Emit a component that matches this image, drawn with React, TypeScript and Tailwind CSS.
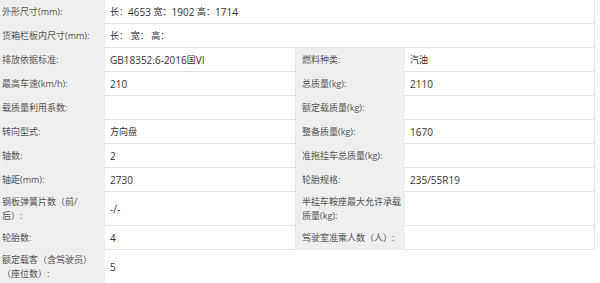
import React from 'react'

type Row = {
  h: string
  l1: React.ReactNode
  v1: string
  l2?: React.ReactNode
  v2?: string
  span?: boolean
  tail?: boolean
}

const rows: Row[] = [
  { h: 'h-[24px]', l1: '外形尺寸(mm):', v1: '长：4653 宽：1902 高：1714', span: true },
  { h: 'h-[24px]', l1: '货箱栏板内尺寸(mm):', v1: '长： 宽： 高：', span: true },
  { h: 'h-[24px]', l1: '排放依据标准:', v1: 'GB18352.6-2016国VI', l2: '燃料种类:', v2: '汽油' },
  { h: 'h-[24px]', l1: '最高车速(km/h):', v1: '210', l2: '总质量(kg):', v2: '2110' },
  { h: 'h-[24px]', l1: '载质量利用系数:', v1: '', l2: '额定载质量(kg):', v2: '' },
  { h: 'h-[24px]', l1: '转向型式:', v1: '方向盘', l2: '整备质量(kg):', v2: '1670' },
  { h: 'h-[24px]', l1: '轴数:', v1: '2', l2: '准拖挂车总质量(kg):', v2: '' },
  { h: 'h-[24px]', l1: '轴距(mm):', v1: '2730', l2: '轮胎规格:', v2: '235/55R19' },
  {
    h: 'h-[34px]',
    l1: (
      <>
        钢板弹簧片数（前/
        <br />
        后）:
      </>
    ),
    v1: '-/-',
    l2: (
      <>
        半挂车鞍座最大允许承载
        <br />
        质量(kg):
      </>
    ),
    v2: '',
  },
  { h: 'h-[24px]', l1: '轮胎数:', v1: '4', l2: '驾驶室准乘人数（人）:', v2: '' },
  {
    h: 'h-[33px]',
    l1: (
      <>
        额定载客（含驾驶员）
        <br />
        （座位数）:
      </>
    ),
    v1: '5',
    tail: true,
  },
]

// CJK runs render a touch smaller than the digits in the original
function Val({ text }: { text?: string }) {
  if (!text) return null
  const parts = text.split(/([\u3000-\u9fff\uff00-\uffef]+)/).filter(Boolean)
  return (
    <>
      {parts.map((p, i) =>
        /[\u3000-\u9fff\uff00-\uffef]/.test(p) ? (
          <span key={i} className="text-[9px]">
            {p}
          </span>
        ) : (
          <span key={i} className="whitespace-pre">{p}</span>
        )
      )}
    </>
  )
}

export default function App() {
  return (
    <div
      className="w-[600px] h-[283px] overflow-hidden bg-white text-[10px] leading-[14px] text-[#333]"
      style={{ fontFamily: '"Open Sans", "Noto Sans CJK SC", sans-serif' }}
    >
      {rows.map((r, i) => (
        <div key={i} className={`flex ${r.h}`}>
          <div className="w-[105px] shrink-0 bg-[#efefef] pl-[2px] flex items-center whitespace-nowrap text-[9px] text-[#555]">
            {r.l1}
          </div>
          {r.span ? (
            <div className="w-[490px] bg-white border-b border-r border-[#e6e6e6] pl-[5px] flex items-center whitespace-nowrap">
              <Val text={r.v1} />
            </div>
          ) : (
            <>
              <div
                className={`w-[191px] bg-white pl-[5px] flex items-center whitespace-nowrap ${
                  r.tail ? '' : 'border-b border-r border-[#e6e6e6]'
                }`}
              >
                <Val text={r.v1} />
              </div>
              {r.tail ? (
                <div className="flex-1 bg-white" />
              ) : (
                <>
                  <div className="w-[109px] shrink-0 bg-[#efefef] pl-[6px] flex items-center whitespace-nowrap text-[9px] text-[#555]">
                    {r.l2}
                  </div>
                  <div className="w-[190px] bg-white border-b border-r border-[#e6e6e6] pl-[5px] flex items-center whitespace-nowrap">
                    <Val text={r.v2} />
                  </div>
                </>
              )}
            </>
          )}
        </div>
      ))}
    </div>
  )
}
